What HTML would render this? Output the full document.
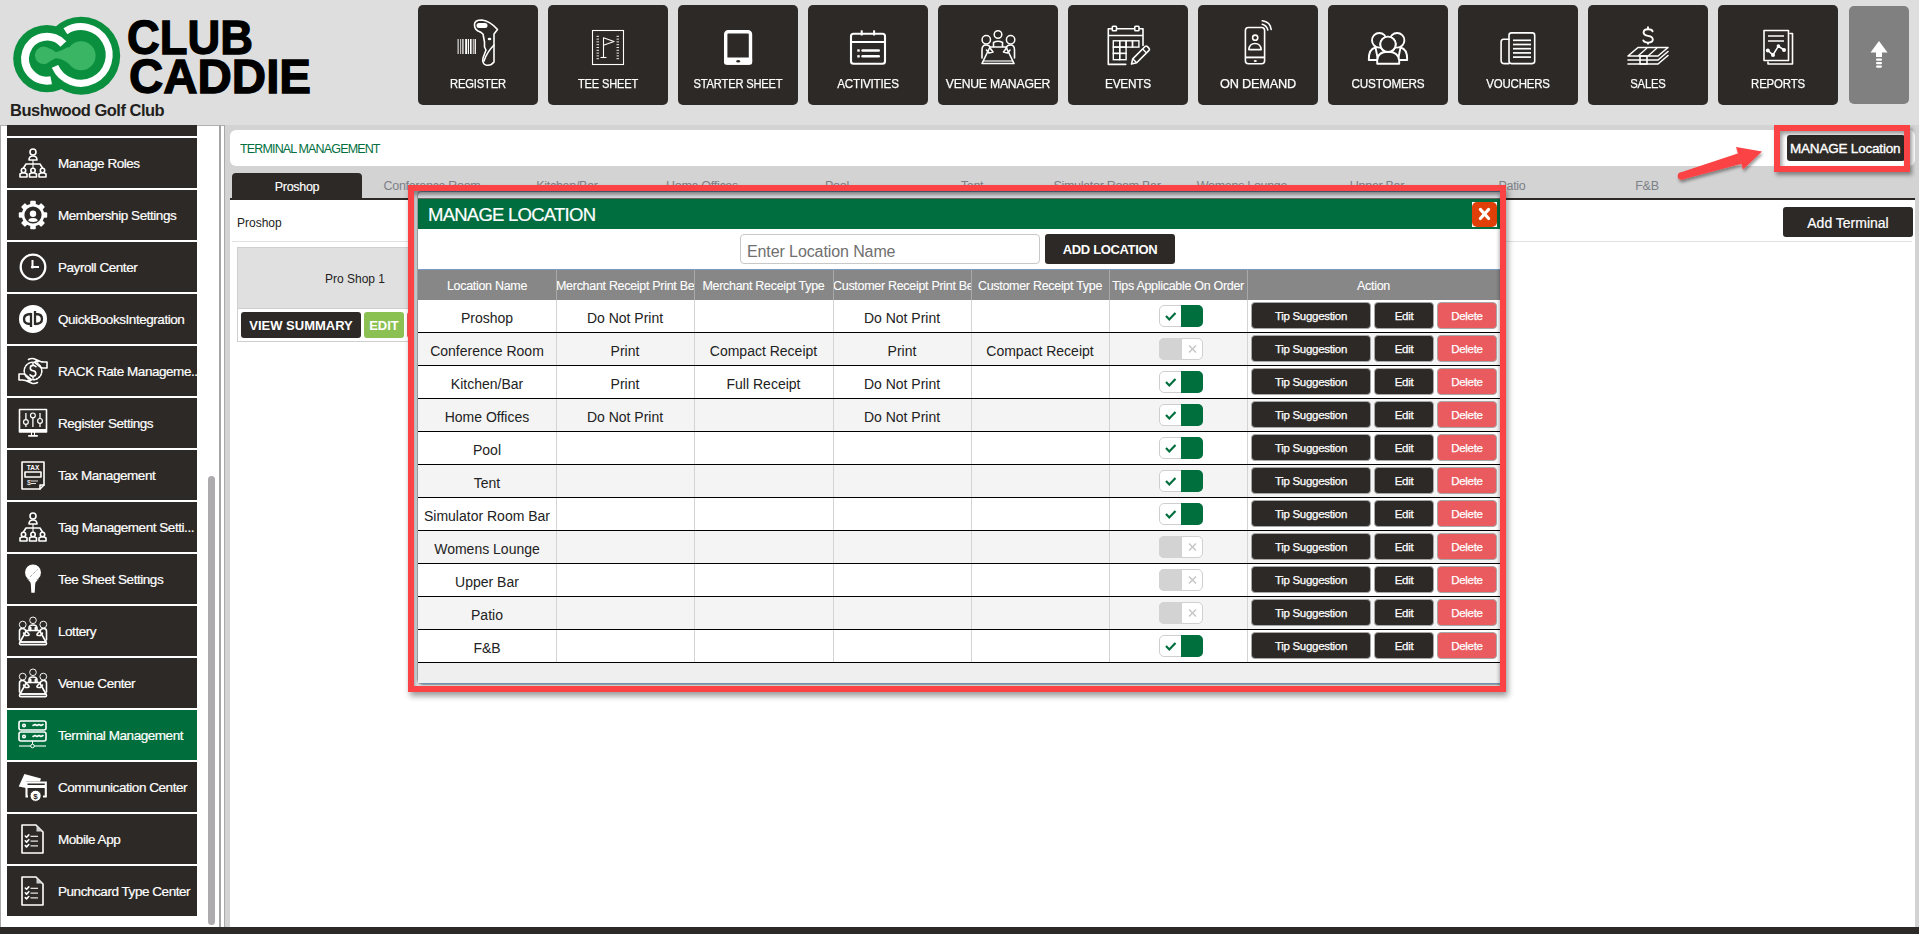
<!DOCTYPE html><html><head><meta charset="utf-8"><style>
*{margin:0;padding:0}
html,body{width:1919px;height:934px;overflow:hidden;background:#dedede;font-family:'Liberation Sans', sans-serif;position:relative}
.nav{position:absolute;top:5px;width:120px;height:100px;background:#2d2926;border-radius:5px}
.nav span{position:absolute;left:0;right:0;top:72px;text-align:center;font:12.5px 'Liberation Sans', sans-serif;color:#fff;letter-spacing:-0.2px;white-space:nowrap;-webkit-text-stroke:0.25px #fff;transform:scaleX(0.88)}
.si{position:absolute;left:7px;width:190px;height:50px;background:#2d2926}
.si.act{background:#006e3c}
.si span{position:absolute;left:51px;top:17.5px;font:13.5px 'Liberation Sans', sans-serif;color:#fff;letter-spacing:-0.45px;white-space:nowrap;-webkit-text-stroke:0.2px #fff}
.tab{position:absolute;top:173px;width:130px;height:24px;text-align:center;font:12.5px/27px 'Liberation Sans', sans-serif;color:#7c8088;letter-spacing:-0.3px;white-space:nowrap}
.tab.act{background:#2d2926;color:#fff;border-radius:4px 4px 0 0;top:173px;height:26px;line-height:28px;-webkit-text-stroke:0.15px #fff}
.btn{position:absolute;background:#2d2926;color:#fff;border-radius:3px;text-align:center;white-space:nowrap;font-family:'Liberation Sans', sans-serif}
.th{position:absolute;top:270px;height:30px;text-align:center;font:12.5px/33px 'Liberation Sans', sans-serif;color:#fff;letter-spacing:-0.3px;white-space:nowrap;overflow:hidden;-webkit-text-stroke:0.1px #fff}
.td{position:absolute;height:32px;text-align:center;font:14px/36px 'Liberation Sans', sans-serif;color:#222;white-space:nowrap}
.tg{position:absolute;left:1159px;width:42px;height:20px;border:1px solid #cfcfcf;border-radius:5px;background:#fff}
.ab{position:absolute;height:27px;background:#2d2926;border:1px solid #a8a8a8;border-radius:4px;box-sizing:border-box;text-align:center;font:11.5px/27px 'Liberation Sans', sans-serif;color:#fff;letter-spacing:-0.3px;-webkit-text-stroke:0.25px #fff}
</style></head><body>
<svg style="position:absolute;left:0;top:0" width="330" height="100" viewBox="0 0 330 100">
<circle cx="46.9" cy="58.6" r="33.7" fill="#0a8f3f"/>
<circle cx="81.2" cy="55.8" r="39" fill="#0a8f3f"/>
<path d="M 51.2 80.3 A 22 22 0 1 1 63.4 44.0" stroke="#fff" stroke-width="8" fill="none"/>
<path d="M 65.4 31.3 A 28.3 28.3 0 1 1 55.0 66.4" stroke="#fff" stroke-width="7" fill="none"/>
<circle cx="43.6" cy="55.3" r="8.7" fill="#3ab563"/>
<circle cx="81.1" cy="55.8" r="14.5" fill="#3ab563"/>
<path d="M 43.6 47.1 Q 50.5 47.8 56 52.2 Q 62 50.8 68.5 46.8 L 74.4 68.8 Q 64 57.8 55.5 58.3 Q 49.5 61.8 43.6 64.5 Z" fill="#3ab563"/>
<text x="127" y="53.5" font-family="Liberation Sans" font-weight="bold" font-size="48" fill="#000" stroke="#000" stroke-width="1.3" textLength="126" lengthAdjust="spacingAndGlyphs">CLUB</text>
<text x="129" y="93.3" font-family="Liberation Sans" font-weight="bold" font-size="48" fill="#000" stroke="#000" stroke-width="1.3" textLength="182" lengthAdjust="spacingAndGlyphs">CADDIE</text>
</svg>
<div style="position:absolute;left:10px;top:100.5px;font:bold 16.5px/18px 'Liberation Sans', sans-serif;color:#231f1c;letter-spacing:-0.5px">Bushwood Golf Club</div>
<div class="nav" style="left:418px"><span style="transform:scaleX(0.897)">REGISTER</span></div><div class="nav" style="left:548px"><span style="transform:scaleX(0.887)">TEE SHEET</span></div><div class="nav" style="left:678px"><span style="transform:scaleX(0.892)">STARTER SHEET</span></div><div class="nav" style="left:808px"><span style="transform:scaleX(0.931)">ACTIVITIES</span></div><div class="nav" style="left:938px"><span style="transform:scaleX(0.975)">VENUE MANAGER</span></div><div class="nav" style="left:1068px"><span style="transform:scaleX(0.944)">EVENTS</span></div><div class="nav" style="left:1198px"><span style="transform:scaleX(1.02)">ON DEMAND</span></div><div class="nav" style="left:1328px"><span style="transform:scaleX(0.938)">CUSTOMERS</span></div><div class="nav" style="left:1458px"><span style="transform:scaleX(0.915)">VOUCHERS</span></div><div class="nav" style="left:1588px"><span style="transform:scaleX(0.901)">SALES</span></div><div class="nav" style="left:1718px"><span style="transform:scaleX(0.915)">REPORTS</span></div><div class="nav" style="left:1849px;top:6px;width:60px;height:98px;background:#808080"></div><svg style="position:absolute;left:0;top:0" width="1919" height="110" viewBox="0 0 1919 110"><rect x="457.6" y="39" width="1.0" height="15" fill="#fff"/><rect x="460.3" y="39" width="0.8" height="15" fill="#fff"/><rect x="462.3" y="39" width="1.2" height="15" fill="#fff"/><rect x="465.2" y="39" width="2.0" height="15" fill="#fff"/><rect x="468" y="39" width="1.0" height="15" fill="#fff"/><rect x="470" y="39" width="1.6" height="15" fill="#fff"/><rect x="472.8" y="39" width="0.8" height="15" fill="#fff"/><rect x="474.6" y="39" width="1.3" height="15" fill="#fff"/><path d="M474.5 25 Q474 20 482 20 Q490 21 497.5 29.5 L494 34 L494 62 Q491 66 486 65 Q482 64 483 58 L486 50 L484.5 47 L484.5 42 L483 34 Q481 32 478 31 Q474.5 29 474.5 25 Z" stroke="#fff" fill="none" stroke-width="1.6" stroke-linecap="round" stroke-linejoin="round"/>
<rect x="476.5" y="23" width="11" height="5" rx="2.5" fill="#fff"/>
<ellipse cx="489.5" cy="39" rx="1.8" ry="1.2" fill="#fff"/>
<path d="M494 45 Q487 52 484 61" stroke="#fff" fill="none" stroke-width="1.6" stroke-linecap="round" stroke-linejoin="round"/><rect x="592.5" y="30.5" width="31" height="34" stroke="#fff" stroke-width="1.1" fill="none"/><line x1="596.5" y1="36.3" x2="599" y2="36.3" stroke="#fff" stroke-width="0.9"/><line x1="616.5" y1="36.3" x2="619" y2="36.3" stroke="#fff" stroke-width="0.9"/><line x1="596.5" y1="39.099999999999994" x2="599" y2="39.099999999999994" stroke="#fff" stroke-width="0.9"/><line x1="616.5" y1="39.099999999999994" x2="619" y2="39.099999999999994" stroke="#fff" stroke-width="0.9"/><line x1="596.5" y1="41.9" x2="599" y2="41.9" stroke="#fff" stroke-width="0.9"/><line x1="616.5" y1="41.9" x2="619" y2="41.9" stroke="#fff" stroke-width="0.9"/><line x1="596.5" y1="44.699999999999996" x2="599" y2="44.699999999999996" stroke="#fff" stroke-width="0.9"/><line x1="616.5" y1="44.699999999999996" x2="619" y2="44.699999999999996" stroke="#fff" stroke-width="0.9"/><line x1="596.5" y1="47.5" x2="599" y2="47.5" stroke="#fff" stroke-width="0.9"/><line x1="616.5" y1="47.5" x2="619" y2="47.5" stroke="#fff" stroke-width="0.9"/><line x1="596.5" y1="50.3" x2="599" y2="50.3" stroke="#fff" stroke-width="0.9"/><line x1="616.5" y1="50.3" x2="619" y2="50.3" stroke="#fff" stroke-width="0.9"/><line x1="596.5" y1="53.099999999999994" x2="599" y2="53.099999999999994" stroke="#fff" stroke-width="0.9"/><line x1="616.5" y1="53.099999999999994" x2="619" y2="53.099999999999994" stroke="#fff" stroke-width="0.9"/><line x1="596.5" y1="55.89999999999999" x2="599" y2="55.89999999999999" stroke="#fff" stroke-width="0.9"/><line x1="616.5" y1="55.89999999999999" x2="619" y2="55.89999999999999" stroke="#fff" stroke-width="0.9"/><line x1="596.5" y1="58.699999999999996" x2="599" y2="58.699999999999996" stroke="#fff" stroke-width="0.9"/><line x1="616.5" y1="58.699999999999996" x2="619" y2="58.699999999999996" stroke="#fff" stroke-width="0.9"/><line x1="603.5" y1="57.3" x2="603.5" y2="37.5" stroke="#fff" stroke-width="1.1"/><path d="M603.5 37.8 L614 41.6 L603.5 45.2" stroke="#fff" stroke-width="1.1" fill="none" stroke-linejoin="round"/><line x1="600.5" y1="57.5" x2="606.5" y2="57.5" stroke="#fff" stroke-width="1.1"/><rect x="725.7" y="31.8" width="24.8" height="31.2" rx="2.5" stroke="#fff" stroke-width="3.4" fill="none"/>
<rect x="724" y="57.6" width="28.2" height="7.2" rx="2.5" fill="#fff"/>
<ellipse cx="738.2" cy="61.3" rx="1.9" ry="1.3" fill="#2d2926"/><rect x="851" y="33.8" width="34" height="30" rx="2.5" stroke="#fff" stroke-width="2.1" fill="none"/>
<line x1="851" y1="42.1" x2="885" y2="42.1" stroke="#fff" stroke-width="2"/>
<line x1="861.7" y1="30.3" x2="861.7" y2="35.5" stroke="#fff" stroke-width="2"/><line x1="874.1" y1="30.3" x2="874.1" y2="35.5" stroke="#fff" stroke-width="2"/>
<rect x="857.3" y="49.3" width="2.4" height="2.4" fill="#fff"/><line x1="862.5" y1="50.5" x2="878.8" y2="50.5" stroke="#fff" stroke-width="2.4" stroke-linecap="round"/>
<rect x="857.3" y="55.1" width="2.4" height="2.4" fill="#fff"/><line x1="862.5" y1="56.3" x2="878.8" y2="56.3" stroke="#fff" stroke-width="2.4" stroke-linecap="round"/><circle cx="998" cy="34.5" r="3.8" stroke="#fff" stroke-width="1.5" fill="none"/><circle cx="986.3" cy="39.8" r="4.2" stroke="#fff" stroke-width="1.5" fill="none"/><circle cx="1010.6" cy="39.8" r="4.2" stroke="#fff" stroke-width="1.5" fill="none"/>
<path d="M993.5 46.5 L993.5 42.5 Q998 40 1002.5 42.5 L1002.5 46.5" stroke="#fff" fill="none" stroke-width="1.6" stroke-linecap="round" stroke-linejoin="round" stroke-width="1.5"/>
<path d="M990 47 L1006 47 L1014 63.5 L982 63.5 Z" stroke="#fff" fill="none" stroke-width="1.6" stroke-linecap="round" stroke-linejoin="round" stroke-width="1.5"/>
<line x1="983" y1="61" x2="1013" y2="61" stroke="#fff" stroke-width="1.2"/>
<path d="M982 58 L982 50 Q982 45 986 45 Q990 45 990 48 L993 52 L989 53 L986.5 50" stroke="#fff" fill="none" stroke-width="1.6" stroke-linecap="round" stroke-linejoin="round" stroke-width="1.4"/>
<path d="M1014.5 58 L1014.5 50 Q1014.5 45 1010.5 45 Q1006.5 45 1006.5 48 L1003.5 52 L1007.5 53 L1010 50" stroke="#fff" fill="none" stroke-width="1.6" stroke-linecap="round" stroke-linejoin="round" stroke-width="1.4"/><path d="M1125.7 64.4 L1108.3 64.4 L1108.3 28.8 L1143 28.8 L1143 45.4" stroke="#fff" fill="none" stroke-width="1.6" stroke-linecap="round" stroke-linejoin="round" stroke-width="1.6" stroke-linecap="butt"/>
<line x1="1108.3" y1="35.5" x2="1143" y2="35.5" stroke="#fff" stroke-width="1.6"/>
<rect x="1112.3" y="26.2" width="4.2" height="4.6" rx="0.8" fill="#2d2926" stroke="#fff" stroke-width="1.6"/><rect x="1134.8" y="26.2" width="4.2" height="4.6" rx="0.8" fill="#2d2926" stroke="#fff" stroke-width="1.6"/><rect x="1113.3" y="40.8" width="6.4" height="6.3" stroke="#fff" stroke-width="1.4" fill="none"/><rect x="1119.7" y="40.8" width="6.4" height="6.3" stroke="#fff" stroke-width="1.4" fill="none"/><rect x="1126.1" y="40.8" width="6.4" height="6.3" stroke="#fff" stroke-width="1.4" fill="none"/><rect x="1132.5" y="40.8" width="6.4" height="6.3" stroke="#fff" stroke-width="1.4" fill="none"/><rect x="1113.3" y="47.099999999999994" width="6.4" height="6.3" stroke="#fff" stroke-width="1.4" fill="none"/><rect x="1119.7" y="47.099999999999994" width="6.4" height="6.3" stroke="#fff" stroke-width="1.4" fill="none"/><rect x="1113.3" y="53.4" width="6.4" height="6.3" stroke="#fff" stroke-width="1.4" fill="none"/><rect x="1119.7" y="53.4" width="6.4" height="6.3" stroke="#fff" stroke-width="1.4" fill="none"/><g transform="rotate(-45 1131.5 64)"><path d="M1131.5 64 L1136 61.2 L1153.5 61.2 Q1155 61.2 1155 63 L1155 65 Q1155 66.8 1153.5 66.8 L1136 66.8 Z" stroke="#fff" fill="none" stroke-width="1.6" stroke-linecap="round" stroke-linejoin="round" stroke-width="1.5"/><line x1="1136" y1="61.2" x2="1136" y2="66.8" stroke="#fff" stroke-width="1.4"/><line x1="1150" y1="61.2" x2="1150" y2="66.8" stroke="#fff" stroke-width="1.4"/></g><rect x="1245.4" y="27.5" width="19.2" height="36.3" rx="3" stroke="#fff" fill="none" stroke-width="1.6" stroke-linecap="round" stroke-linejoin="round" stroke-width="2"/>
<line x1="1245.4" y1="57.4" x2="1264.6" y2="57.4" stroke="#fff" stroke-width="1.9"/>
<ellipse cx="1255.3" cy="61" rx="1.6" ry="1" fill="#fff"/>
<circle cx="1255.2" cy="37.7" r="2.6" stroke="#fff" fill="none" stroke-width="1.6" stroke-linecap="round" stroke-linejoin="round" stroke-width="1.8"/>
<path d="M1248.8 49.6 Q1249.5 43.5 1255 43.5 Q1260.5 43.5 1261.2 49.6 Z" stroke="#fff" fill="none" stroke-width="1.6" stroke-linecap="round" stroke-linejoin="round" stroke-width="1.8"/>
<path d="M1262.3 24.2 Q1266.8 25.5 1267.8 30" stroke="#fff" fill="none" stroke-width="1.6" stroke-linecap="round" stroke-linejoin="round" stroke-width="1.9"/><path d="M1262.3 20.8 Q1270.5 22 1271.2 29.5" stroke="#fff" fill="none" stroke-width="1.6" stroke-linecap="round" stroke-linejoin="round" stroke-width="1.9"/><circle cx="1379.3" cy="40.3" r="7.3" fill="#2d2926" stroke="#fff" stroke-width="1.9"/>
<circle cx="1397.1" cy="40.3" r="7.3" fill="#2d2926" stroke="#fff" stroke-width="1.9"/>
<path d="M1368.8 60 Q1368.5 49 1375.5 47.5 L1378 60 Z" fill="#2d2926" stroke="#fff" stroke-width="1.9" stroke-linejoin="round"/>
<path d="M1407.2 60 Q1407.5 49 1400.5 47.5 L1398 60 Z" fill="#2d2926" stroke="#fff" stroke-width="1.9" stroke-linejoin="round"/>
<circle cx="1388" cy="44.3" r="7.7" fill="#2d2926" stroke="#fff" stroke-width="1.9"/>
<path d="M1377.2 63.8 L1377.2 60.5 Q1377.5 51.8 1388 51.8 Q1398.5 51.8 1399.2 60.5 L1399.2 63.8 Z" fill="#2d2926" stroke="#fff" stroke-width="1.9" stroke-linejoin="round"/>
<circle cx="1388" cy="44.3" r="7.7" fill="#2d2926" stroke="#fff" stroke-width="1.9"/><rect x="1509" y="32.9" width="25.7" height="30.7" rx="2.5" stroke="#fff" fill="none" stroke-width="1.6" stroke-linecap="round" stroke-linejoin="round" stroke-width="1.9"/>
<path d="M1509 39.3 L1503.5 39.3 Q1501.1 39.3 1501.1 42 L1501.1 60.5 Q1501.1 63.6 1504.5 63.6 L1509 63.6" stroke="#fff" fill="none" stroke-width="1.6" stroke-linecap="round" stroke-linejoin="round" stroke-width="1.9"/><line x1="1513" y1="40.3" x2="1531" y2="40.3" stroke="#fff" stroke-width="1.7"/><line x1="1513" y1="44.5" x2="1531" y2="44.5" stroke="#fff" stroke-width="1.7"/><line x1="1513" y1="48.699999999999996" x2="1531" y2="48.699999999999996" stroke="#fff" stroke-width="1.7"/><line x1="1513" y1="52.9" x2="1531" y2="52.9" stroke="#fff" stroke-width="1.7"/><line x1="1513" y1="57.099999999999994" x2="1531" y2="57.099999999999994" stroke="#fff" stroke-width="1.7"/><path d="M1652.6 31.2 Q1651.5 29.3 1648 29.3 Q1643.6 29.3 1643.6 32.6 Q1643.6 35.3 1648 35.9 Q1652.8 36.6 1652.8 39.6 Q1652.8 42.6 1648 42.6 Q1644.2 42.6 1643.3 40.4" stroke="#fff" stroke-width="1.9" fill="none" stroke-linecap="round"/><line x1="1648" y1="26.5" x2="1648" y2="29.3" stroke="#fff" stroke-width="1.9"/><line x1="1648" y1="42.6" x2="1648" y2="44.5" stroke="#fff" stroke-width="1.9"/>
<path d="M1628 56 L1638 47.5 L1668 47.5 L1658 56 Z" stroke="#fff" fill="none" stroke-width="1.6" stroke-linecap="round" stroke-linejoin="round" stroke-width="1.6"/>
<line x1="1638" y1="56" x2="1647" y2="48" stroke="#fff" stroke-width="1.4"/><line x1="1648" y1="56" x2="1657" y2="48" stroke="#fff" stroke-width="1.4"/>
<path d="M1628 60 L1658 60 L1668 51.5" stroke="#fff" fill="none" stroke-width="1.6" stroke-linecap="round" stroke-linejoin="round" stroke-width="1.6"/>
<path d="M1628 64 L1658 64 L1668 55.5" stroke="#fff" fill="none" stroke-width="1.6" stroke-linecap="round" stroke-linejoin="round" stroke-width="1.6"/>
<rect x="1640" y="56" width="7" height="8" stroke="#fff" fill="none" stroke-width="1.6" stroke-linecap="round" stroke-linejoin="round" stroke-width="1.3"/><rect x="1764" y="30.5" width="24.5" height="30" stroke="#fff" fill="none" stroke-width="1.6" stroke-linecap="round" stroke-linejoin="round" stroke-width="1.7"/>
<path d="M1790 33.5 L1792.5 33.5 L1792.5 64 L1768 64 L1768 62" stroke="#fff" fill="none" stroke-width="1.6" stroke-linecap="round" stroke-linejoin="round" stroke-width="1.5"/>
<line x1="1768" y1="36" x2="1784" y2="36" stroke="#fff" stroke-width="1.5"/><line x1="1768" y1="41" x2="1784" y2="41" stroke="#fff" stroke-width="1.5"/>
<path d="M1767.8 50.5 L1773 54.9 L1778.4 46.1 L1784 50" stroke="#fff" fill="none" stroke-width="1.6" stroke-linecap="round" stroke-linejoin="round" stroke-width="1.5"/>
<circle cx="1767.8" cy="50.5" r="2" fill="#fff"/><circle cx="1773" cy="54.9" r="2" fill="#fff"/><circle cx="1778.4" cy="46.1" r="1.8" fill="#fff"/><circle cx="1784" cy="50" r="2" fill="#fff"/><path d="M1879 41 L1887.5 52.5 L1882 52.5 L1882 57 L1876 57 L1876 52.5 L1870.5 52.5 Z" fill="#fff"/>
<rect x="1876" y="58.5" width="6" height="2.2" rx="1" fill="#fff"/><rect x="1876" y="62" width="6" height="2.2" rx="1" fill="#fff"/><rect x="1876" y="65.5" width="6" height="2.2" rx="1.1" fill="#fff"/></svg>
<div style="position:absolute;left:225px;top:125px;width:1694px;height:802px;background:#d3d3d3"></div><div style="position:absolute;left:230px;top:130px;width:1685px;height:36px;background:#fff;border-radius:6px"></div><div style="position:absolute;left:240px;top:142px;font:12.5px 'Liberation Sans', sans-serif;color:#006f3e;letter-spacing:-0.85px">TERMINAL MANAGEMENT</div><div class="tab act" style="left:232px">Proshop</div><div class="tab" style="left:367px">Conference Room</div><div class="tab" style="left:502px">Kitchen/Bar</div><div class="tab" style="left:637px">Home Offices</div><div class="tab" style="left:772px">Pool</div><div class="tab" style="left:907px">Tent</div><div class="tab" style="left:1042px">Simulator Room Bar</div><div class="tab" style="left:1177px">Womens Lounge</div><div class="tab" style="left:1312px">Upper Bar</div><div class="tab" style="left:1447px">Patio</div><div class="tab" style="left:1582px">F&amp;B</div><div style="position:absolute;left:230px;top:198px;width:1685px;height:2px;background:#2d2926"></div><div style="position:absolute;left:230px;top:200px;width:1685px;height:727px;background:#fff"></div><div style="position:absolute;left:237px;top:216px;font:12px 'Liberation Sans', sans-serif;color:#222">Proshop</div><div style="position:absolute;left:232px;top:241px;width:1680px;height:1px;background:#e2e2e2"></div><div class="btn" style="left:1783px;top:207px;width:130px;height:30px;font-size:14px;line-height:32px;-webkit-text-stroke:0.2px #fff">Add Terminal</div><div style="position:absolute;left:237px;top:247px;width:200px;height:95px;border:1px solid #cfcfcf;background:#fff;box-sizing:border-box"></div><div style="position:absolute;left:238px;top:248px;width:198px;height:60px;background:#e0e0e0;border-bottom:1px solid #cfcfcf"></div><div style="position:absolute;left:325px;top:272px;font:12px 'Liberation Sans', sans-serif;color:#222">Pro Shop 1</div><div class="btn" style="left:241px;top:312px;width:120px;height:26px;font:bold 13px/28px 'Liberation Sans', sans-serif">VIEW SUMMARY</div><div class="btn" style="left:364px;top:312px;width:40px;height:26px;font:bold 13px/28px 'Liberation Sans', sans-serif;background:#8bc152">EDIT</div><div class="btn" style="left:407px;top:312px;width:30px;height:26px;background:#e95b5f"></div><div class="btn" style="left:1787px;top:135px;width:118px;height:26px;font:13.5px/28px 'Liberation Sans', sans-serif;-webkit-text-stroke:0.35px #fff;letter-spacing:-0.2px;text-align:left;text-indent:3px">MANAGE Location</div><div style="position:absolute;left:1774px;top:125px;width:136px;height:47px;border:6px solid #fb4345;box-sizing:border-box;box-shadow:2px 3px 4px rgba(0,0,0,0.4), inset 2px 3px 4px rgba(0,0,0,0.4)"></div><svg style="position:absolute;left:1660px;top:140px" width="110" height="50" viewBox="1660 140 110 50">
<defs><filter id="sh" x="-20%" y="-20%" width="140%" height="160%"><feDropShadow dx="1" dy="2.5" stdDeviation="1.8" flood-color="#000" flood-opacity="0.4"/></filter></defs>
<g filter="url(#sh)"><circle cx="1681.5" cy="176" r="3.8" fill="#fb4345"/><path d="M1682.6 179.6 L1741.6 163.8 L1738.4 153.2 L1680.4 172.4 Z" fill="#fb4345"/>
<path d="M1736 147 L1762 151.5 L1743 169.5 Z" fill="#fb4345"/></g></svg>
<div style="position:absolute;left:0;top:125px;width:225px;height:802px;background:#fff;overflow:hidden"><div style="position:absolute;left:0;top:0;width:1px;height:802px;background:#a8a8a8"></div><div style="position:absolute;left:0;top:0;width:225px;height:1px;background:#b0b0b0"></div><div class="si" style="top:-39px"></div><div class="si" style="top:13px"><span>Manage Roles</span></div><div class="si" style="top:65px"><span>Membership Settings</span></div><div class="si" style="top:117px"><span>Payroll Center</span></div><div class="si" style="top:169px"><span>QuickBooksIntegration</span></div><div class="si" style="top:221px"><span>RACK Rate Manageme...</span></div><div class="si" style="top:273px"><span>Register Settings</span></div><div class="si" style="top:325px"><span>Tax Management</span></div><div class="si" style="top:377px"><span>Tag Management Setti...</span></div><div class="si" style="top:429px"><span>Tee Sheet Settings</span></div><div class="si" style="top:481px"><span>Lottery</span></div><div class="si" style="top:533px"><span>Venue Center</span></div><div class="si act" style="top:585px"><span>Terminal Management</span></div><div class="si" style="top:637px"><span>Communication Center</span></div><div class="si" style="top:689px"><span>Mobile App</span></div><div class="si" style="top:741px"><span>Punchcard Type Center</span></div><div style="position:absolute;left:208px;top:351px;width:7px;height:449px;background:#adabad;border-radius:3.5px"></div><div style="position:absolute;left:219px;top:0;width:2px;height:802px;background:#a4a4a4"></div><div style="position:absolute;left:224px;top:0;width:1px;height:802px;background:#aaa"></div></div><svg style="position:absolute;left:0;top:0" width="225" height="927" viewBox="0 0 225 927"><circle cx="33" cy="152" r="3" stroke="#fff" fill="none" stroke-width="1.6" stroke-linecap="round" stroke-linejoin="round" stroke-width="1.1"/><path d="M29 160 Q29 156 33 156 Q37 156 37 160 Z" stroke="#fff" fill="none" stroke-width="1.6" stroke-linecap="round" stroke-linejoin="round" stroke-width="1.1"/>
<line x1="33" y1="160" x2="33" y2="169" stroke="#fff" stroke-width="1.1"/><path d="M23.5 168 L26 164 L40 164 L42.5 168" stroke="#fff" fill="none" stroke-width="1.6" stroke-linecap="round" stroke-linejoin="round" stroke-width="1.1"/>
<circle cx="23.5" cy="170.5" r="2.2" stroke="#fff" fill="none" stroke-width="1.6" stroke-linecap="round" stroke-linejoin="round" stroke-width="1.1"/><path d="M20.0 177 L20.0 174 Q23.5 171.5 27.0 174 L27.0 177 Z" stroke="#fff" fill="none" stroke-width="1.6" stroke-linecap="round" stroke-linejoin="round" stroke-width="1.1"/><circle cx="33" cy="170.5" r="2.2" stroke="#fff" fill="none" stroke-width="1.6" stroke-linecap="round" stroke-linejoin="round" stroke-width="1.1"/><path d="M29.5 177 L29.5 174 Q33 171.5 36.5 174 L36.5 177 Z" stroke="#fff" fill="none" stroke-width="1.6" stroke-linecap="round" stroke-linejoin="round" stroke-width="1.1"/><circle cx="42.5" cy="170.5" r="2.2" stroke="#fff" fill="none" stroke-width="1.6" stroke-linecap="round" stroke-linejoin="round" stroke-width="1.1"/><path d="M39.0 177 L39.0 174 Q42.5 171.5 46.0 174 L46.0 177 Z" stroke="#fff" fill="none" stroke-width="1.6" stroke-linecap="round" stroke-linejoin="round" stroke-width="1.1"/><rect x="30.2" y="200.8" width="5.6" height="4.5" rx="1" fill="#fff" transform="rotate(0 33 215)"/><rect x="30.2" y="200.8" width="5.6" height="4.5" rx="1" fill="#fff" transform="rotate(45 33 215)"/><rect x="30.2" y="200.8" width="5.6" height="4.5" rx="1" fill="#fff" transform="rotate(90 33 215)"/><rect x="30.2" y="200.8" width="5.6" height="4.5" rx="1" fill="#fff" transform="rotate(135 33 215)"/><rect x="30.2" y="200.8" width="5.6" height="4.5" rx="1" fill="#fff" transform="rotate(180 33 215)"/><rect x="30.2" y="200.8" width="5.6" height="4.5" rx="1" fill="#fff" transform="rotate(225 33 215)"/><rect x="30.2" y="200.8" width="5.6" height="4.5" rx="1" fill="#fff" transform="rotate(270 33 215)"/><rect x="30.2" y="200.8" width="5.6" height="4.5" rx="1" fill="#fff" transform="rotate(315 33 215)"/><circle cx="33" cy="215" r="11.3" fill="#fff"/><circle cx="33" cy="215" r="8.6" fill="#2d2926"/>
<path d="M28.3 221 Q28.3 218 33 218 Q37.7 218 37.7 221 Q33 222.8 28.3 221 Z" fill="#fff"/><circle cx="33" cy="213.8" r="4.3" fill="#2d2926"/><circle cx="33" cy="213.8" r="3.2" fill="#fff"/><circle cx="33" cy="267" r="12.3" stroke="#fff" stroke-width="2.3" fill="none"/><path d="M32.5 260 L32.5 267 L39 267" stroke="#fff" stroke-width="2" fill="none"/><circle cx="32.5" cy="267" r="1.6" fill="#fff"/><circle cx="33" cy="319" r="14" fill="#fff"/><path d="M31 313 L31 327 M31 314 Q24 314 24 319 Q24 324 30 324" stroke="#2d2926" stroke-width="2.3" fill="none"/><path d="M35 325 L35 311 M35 324 Q42 324 42 319 Q42 314 36 314" stroke="#2d2926" stroke-width="2.3" fill="none"/><circle cx="33" cy="371" r="8.8" stroke="#fff" fill="none" stroke-width="1.6" stroke-linecap="round" stroke-linejoin="round" stroke-width="0.9" stroke-dasharray="1.6 1.4"/>
<path d="M36 366.7 Q34.8 365.4 33 365.4 Q30.3 365.4 30.3 368 Q30.3 370.4 33 370.7 Q35.8 371 35.8 373.6 Q35.8 376.3 33 376.3 Q31 376.3 30 374.8 M33 363.5 L33 365.4 M33 376.3 L33 378.3" stroke="#fff" fill="none" stroke-width="1.6" stroke-linecap="round" stroke-linejoin="round" stroke-width="1.3"/>
<path d="M28.5 359.5 Q31 358 34 358.7 L40.5 361.5 Q42 362 43.5 362 L47 362 L47 368 L43 368 Q41 368 39.5 366.5 L35.5 363.2 Q34.3 362.2 35.5 361.4 Q36.8 360.8 38 361.8" stroke="#fff" fill="none" stroke-width="1.6" stroke-linecap="round" stroke-linejoin="round" stroke-width="1.3"/>
<path d="M37.5 382.5 Q35 384 32 383.3 L25.5 380.5 Q24 380 22.5 380 L19 380 L19 374 L23 374 Q25 374 26.5 375.5 L30.5 378.8 Q31.7 379.8 30.5 380.6 Q29.2 381.2 28 380.2" stroke="#fff" fill="none" stroke-width="1.6" stroke-linecap="round" stroke-linejoin="round" stroke-width="1.3"/><rect x="19.5" y="409.5" width="27" height="22.5" stroke="#fff" fill="none" stroke-width="1.6" stroke-linecap="round" stroke-linejoin="round" stroke-width="1.2"/><rect x="19.5" y="429" width="27" height="3" fill="#fff"/>
<path d="M31.5 432 L31.5 435.6 M34.5 432 L34.5 435.6" stroke="#fff" stroke-width="1.1"/><rect x="28" y="435" width="10" height="1.8" rx="0.8" fill="#fff"/>
<line x1="25.9" y1="413" x2="25.9" y2="427" stroke="#fff" stroke-width="1.3"/><circle cx="25.9" cy="422" r="2.4" fill="#2d2926" stroke="#fff" stroke-width="1.2"/><line x1="32.9" y1="413" x2="32.9" y2="427" stroke="#fff" stroke-width="1.3"/><circle cx="32.9" cy="415.4" r="2.4" fill="#2d2926" stroke="#fff" stroke-width="1.2"/><line x1="40" y1="413" x2="40" y2="427" stroke="#fff" stroke-width="1.3"/><circle cx="40" cy="420.9" r="2.4" fill="#2d2926" stroke="#fff" stroke-width="1.2"/><path d="M22 462 L44 462 L44 485 L40 489 L22 489 Z" stroke="#fff" fill="none" stroke-width="1.6" stroke-linecap="round" stroke-linejoin="round" stroke-width="1.2"/><path d="M44 485 L40 485 L40 489" stroke="#fff" fill="none" stroke-width="1.6" stroke-linecap="round" stroke-linejoin="round" stroke-width="1"/>
<text x="33" y="470" text-anchor="middle" font-family="Liberation Sans" font-weight="bold" font-size="6.5" fill="#fff">TAX</text>
<rect x="25" y="472" width="16" height="5" stroke="#fff" fill="none" stroke-width="1.6" stroke-linecap="round" stroke-linejoin="round" stroke-width="0.9"/><text x="27" y="485" font-family="Liberation Sans" font-size="7" fill="#fff">$</text><line x1="31" y1="481" x2="38" y2="481" stroke="#fff" stroke-width="0.9"/><line x1="31" y1="483.5" x2="36" y2="483.5" stroke="#fff" stroke-width="0.9"/><circle cx="33" cy="516" r="3" stroke="#fff" fill="none" stroke-width="1.6" stroke-linecap="round" stroke-linejoin="round" stroke-width="1.1"/><path d="M29 524 Q29 520 33 520 Q37 520 37 524 Z" stroke="#fff" fill="none" stroke-width="1.6" stroke-linecap="round" stroke-linejoin="round" stroke-width="1.1"/>
<line x1="33" y1="524" x2="33" y2="533" stroke="#fff" stroke-width="1.1"/><path d="M23.5 532 L26 528 L40 528 L42.5 532" stroke="#fff" fill="none" stroke-width="1.6" stroke-linecap="round" stroke-linejoin="round" stroke-width="1.1"/>
<circle cx="23.5" cy="534.5" r="2.2" stroke="#fff" fill="none" stroke-width="1.6" stroke-linecap="round" stroke-linejoin="round" stroke-width="1.1"/><path d="M20.0 541 L20.0 538 Q23.5 535.5 27.0 538 L27.0 541 Z" stroke="#fff" fill="none" stroke-width="1.6" stroke-linecap="round" stroke-linejoin="round" stroke-width="1.1"/><circle cx="33" cy="534.5" r="2.2" stroke="#fff" fill="none" stroke-width="1.6" stroke-linecap="round" stroke-linejoin="round" stroke-width="1.1"/><path d="M29.5 541 L29.5 538 Q33 535.5 36.5 538 L36.5 541 Z" stroke="#fff" fill="none" stroke-width="1.6" stroke-linecap="round" stroke-linejoin="round" stroke-width="1.1"/><circle cx="42.5" cy="534.5" r="2.2" stroke="#fff" fill="none" stroke-width="1.6" stroke-linecap="round" stroke-linejoin="round" stroke-width="1.1"/><path d="M39.0 541 L39.0 538 Q42.5 535.5 46.0 538 L46.0 541 Z" stroke="#fff" fill="none" stroke-width="1.6" stroke-linecap="round" stroke-linejoin="round" stroke-width="1.1"/><circle cx="33" cy="572.5" r="8" fill="#fff"/><path d="M27 579.5 Q30.5 581 30.8 584 L31.3 592.8 L34.7 592.8 L35.2 584 Q35.5 581 39 579.5 Z" fill="#fff"/>
<path d="M30 577 L37.5 569.5" stroke="#2d2926" stroke-width="0.7" stroke-dasharray="0.8 1.2"/><circle cx="33" cy="620.3" r="3.3" stroke="#fff" stroke-width="0.95" fill="none"/><circle cx="22.7" cy="624.6" r="3.4" stroke="#fff" stroke-width="0.95" fill="none"/><circle cx="43.3" cy="624.6" r="3.4" stroke="#fff" stroke-width="0.95" fill="none"/>
<path d="M29 630.5 L29 628 Q29 625 33 625 Q37 625 37 628 L37 630.5 M30.7 630.5 L30.7 627.5 M35.3 630.5 L35.3 627.5" stroke="#fff" fill="none" stroke-width="1.6" stroke-linecap="round" stroke-linejoin="round" stroke-width="0.9"/>
<path d="M26.5 630.5 L39.5 630.5 L46 642 L20 642 Z" stroke="#fff" fill="none" stroke-width="1.6" stroke-linecap="round" stroke-linejoin="round" stroke-width="0.95"/><rect x="19.5" y="642" width="27" height="2.6" rx="1.2" stroke="#fff" fill="none" stroke-width="1.6" stroke-linecap="round" stroke-linejoin="round" stroke-width="0.95"/>
<path d="M19.5 640 L19.5 631 Q19.5 628.5 22.5 628.5 Q25 628.5 26 631 L28.5 633.5 Q30 635.3 28 635.5 L25.5 635.5 L23.5 633" stroke="#fff" fill="none" stroke-width="1.6" stroke-linecap="round" stroke-linejoin="round" stroke-width="0.95"/>
<path d="M46.5 640 L46.5 631 Q46.5 628.5 43.5 628.5 Q41 628.5 40 631 L37.5 633.5 Q36 635.3 38 635.5 L40.5 635.5 L42.5 633" stroke="#fff" fill="none" stroke-width="1.6" stroke-linecap="round" stroke-linejoin="round" stroke-width="0.95"/><circle cx="33" cy="672.3" r="3.3" stroke="#fff" stroke-width="0.95" fill="none"/><circle cx="22.7" cy="676.6" r="3.4" stroke="#fff" stroke-width="0.95" fill="none"/><circle cx="43.3" cy="676.6" r="3.4" stroke="#fff" stroke-width="0.95" fill="none"/>
<path d="M29 682.5 L29 680 Q29 677 33 677 Q37 677 37 680 L37 682.5 M30.7 682.5 L30.7 679.5 M35.3 682.5 L35.3 679.5" stroke="#fff" fill="none" stroke-width="1.6" stroke-linecap="round" stroke-linejoin="round" stroke-width="0.9"/>
<path d="M26.5 682.5 L39.5 682.5 L46 694 L20 694 Z" stroke="#fff" fill="none" stroke-width="1.6" stroke-linecap="round" stroke-linejoin="round" stroke-width="0.95"/><rect x="19.5" y="694" width="27" height="2.6" rx="1.2" stroke="#fff" fill="none" stroke-width="1.6" stroke-linecap="round" stroke-linejoin="round" stroke-width="0.95"/>
<path d="M19.5 692 L19.5 683 Q19.5 680.5 22.5 680.5 Q25 680.5 26 683 L28.5 685.5 Q30 687.3 28 687.5 L25.5 687.5 L23.5 685" stroke="#fff" fill="none" stroke-width="1.6" stroke-linecap="round" stroke-linejoin="round" stroke-width="0.95"/>
<path d="M46.5 692 L46.5 683 Q46.5 680.5 43.5 680.5 Q41 680.5 40 683 L37.5 685.5 Q36 687.3 38 687.5 L40.5 687.5 L42.5 685" stroke="#fff" fill="none" stroke-width="1.6" stroke-linecap="round" stroke-linejoin="round" stroke-width="0.95"/><rect x="19" y="721" width="27" height="9" rx="2" stroke="#fff" fill="none" stroke-width="1.6" stroke-linecap="round" stroke-linejoin="round" stroke-width="1.1"/><rect x="19" y="732" width="27" height="9" rx="2" stroke="#fff" fill="none" stroke-width="1.6" stroke-linecap="round" stroke-linejoin="round" stroke-width="1.1"/>
<circle cx="24" cy="725.5" r="1.3" stroke="#fff" fill="none" stroke-width="1.6" stroke-linecap="round" stroke-linejoin="round" stroke-width="1"/><circle cx="24" cy="736.5" r="1.3" stroke="#fff" fill="none" stroke-width="1.6" stroke-linecap="round" stroke-linejoin="round" stroke-width="1"/>
<path d="M33 725.5 l2 -1 l2 1 l2 -1 l2 1 l2 -1" stroke="#fff" fill="none" stroke-width="1.6" stroke-linecap="round" stroke-linejoin="round" stroke-width="0.8"/><path d="M33 736.5 l2 -1 l2 1 l2 -1 l2 1 l2 -1" stroke="#fff" fill="none" stroke-width="1.6" stroke-linecap="round" stroke-linejoin="round" stroke-width="0.8"/>
<line x1="19" y1="746" x2="46" y2="746" stroke="#fff" stroke-width="1.1"/><circle cx="32.5" cy="746" r="1.8" fill="#006e3c" stroke="#fff" stroke-width="1"/><line x1="32.5" y1="741" x2="32.5" y2="744" stroke="#fff" stroke-width="1"/><path d="M18.7 786.4 L24.4 774 L41 778.5 L40 781.5 L26 781.5 L26 788 Z" fill="#fff"/>
<path d="M28 796.5 L26.5 796.5 L26.5 782.5 L45.8 782.5 L45.8 796.5 L43 796.5" fill="none" stroke="#fff" stroke-width="2.1"/><rect x="26.5" y="785" width="19.3" height="3" fill="#fff"/>
<circle cx="35.6" cy="795.8" r="5.6" fill="#fff" stroke="#2d2926" stroke-width="1"/><text x="35.6" y="798.6" text-anchor="middle" font-family="Liberation Sans" font-weight="bold" font-size="8" fill="#2d2926">$</text><path d="M22 825 L36 825 L43 832 L43 853 L22 853 Z" stroke="#fff" fill="none" stroke-width="1.6" stroke-linecap="round" stroke-linejoin="round" stroke-width="1.1"/><path d="M36.5 825.5 L36.5 831.5 L42.5 831.5 Z" fill="#cfcfcf"/>
<path d="M25.3 836 l1.3 1.3 l2.2 -2.4" stroke="#fff" fill="none" stroke-width="1.6" stroke-linecap="round" stroke-linejoin="round" stroke-width="0.9"/><line x1="30.5" y1="836.3" x2="38" y2="836.3" stroke="#fff" stroke-width="1.1"/><path d="M25.3 840.8 l1.3 1.3 l2.2 -2.4" stroke="#fff" fill="none" stroke-width="1.6" stroke-linecap="round" stroke-linejoin="round" stroke-width="0.9"/><line x1="30.5" y1="841.0999999999999" x2="38" y2="841.0999999999999" stroke="#fff" stroke-width="1.1"/><path d="M25.3 845.6 l1.3 1.3 l2.2 -2.4" stroke="#fff" fill="none" stroke-width="1.6" stroke-linecap="round" stroke-linejoin="round" stroke-width="0.9"/><line x1="30.5" y1="845.9" x2="38" y2="845.9" stroke="#fff" stroke-width="1.1"/><path d="M22 877 L36 877 L43 884 L43 905 L22 905 Z" stroke="#fff" fill="none" stroke-width="1.6" stroke-linecap="round" stroke-linejoin="round" stroke-width="1.1"/><path d="M36.5 877.5 L36.5 883.5 L42.5 883.5 Z" fill="#cfcfcf"/>
<path d="M25.3 888 l1.3 1.3 l2.2 -2.4" stroke="#fff" fill="none" stroke-width="1.6" stroke-linecap="round" stroke-linejoin="round" stroke-width="0.9"/><line x1="30.5" y1="888.3" x2="38" y2="888.3" stroke="#fff" stroke-width="1.1"/><path d="M25.3 892.8 l1.3 1.3 l2.2 -2.4" stroke="#fff" fill="none" stroke-width="1.6" stroke-linecap="round" stroke-linejoin="round" stroke-width="0.9"/><line x1="30.5" y1="893.0999999999999" x2="38" y2="893.0999999999999" stroke="#fff" stroke-width="1.1"/><path d="M25.3 897.6 l1.3 1.3 l2.2 -2.4" stroke="#fff" fill="none" stroke-width="1.6" stroke-linecap="round" stroke-linejoin="round" stroke-width="0.9"/><line x1="30.5" y1="897.9" x2="38" y2="897.9" stroke="#fff" stroke-width="1.1"/></svg>
<div style="position:absolute;left:0;top:927px;width:1919px;height:7px;background:#2d2926"></div>
<div style="position:absolute;left:414px;top:191px;width:1087px;height:495px;background:#dde2e5"></div><div style="position:absolute;left:417.5px;top:191px;width:1086px;height:492.5px;background:#efefef;border:1px solid #6f8fb3;border-radius:5px;box-sizing:border-box;box-shadow:0 0 1.5px 1px rgba(60,60,60,0.5)"></div><div style="position:absolute;left:418px;top:192px;width:1088px;height:6px;background:#dcdce2;border-radius:4px 0 0 0"></div><div style="position:absolute;left:418px;top:198px;width:1082px;height:1px;background:#6a6464"></div><div style="position:absolute;left:418px;top:199px;width:1082px;height:30px;background:#006e3f"></div><div style="position:absolute;left:428px;top:204px;font:18.5px/22px 'Liberation Sans', sans-serif;color:#fff;letter-spacing:-0.75px;-webkit-text-stroke:0.2px #fff">MANAGE LOCATION</div><div style="position:absolute;left:1472px;top:202px;width:25px;height:25px;background:#fff"></div><div style="position:absolute;left:1472px;top:202px;width:25px;height:25px;background:#e04008;border-radius:5px"></div><svg style="position:absolute;left:1472px;top:202px" width="25" height="25"><path d="M8.35 7.4 L16.65 16.5 M16.65 7.4 L8.35 16.5" stroke="#fff" stroke-width="3.1" stroke-linecap="round"/></svg><div style="position:absolute;left:418px;top:229px;width:1082px;height:40px;background:#fff"></div><div style="position:absolute;left:740px;top:234px;width:300px;height:30px;border:1px solid #c8c8c8;border-radius:4px;box-sizing:border-box;font:16px/33px 'Liberation Sans', sans-serif;color:#6f6f6f;padding-left:6px;letter-spacing:-0.1px">Enter Location Name</div><div class="btn" style="left:1045px;top:234px;width:130px;height:30px;font:bold 13px/31px 'Liberation Sans', sans-serif;letter-spacing:-0.35px">ADD LOCATION</div><div style="position:absolute;left:418px;top:269px;width:1082px;height:31px;background:#878787;border-top:1px solid #7b9bc4;box-sizing:border-box"></div><div class="th" style="left:418px;width:138px">Location Name</div><div class="th" style="left:556px;width:138px">Merchant Receipt Print Be</div><div style="position:absolute;left:556px;top:270px;width:1px;height:30px;background:#a9a9a9"></div><div class="th" style="left:694px;width:139px">Merchant Receipt Type</div><div style="position:absolute;left:694px;top:270px;width:1px;height:30px;background:#a9a9a9"></div><div class="th" style="left:833px;width:138px">Customer Receipt Print Be</div><div style="position:absolute;left:833px;top:270px;width:1px;height:30px;background:#a9a9a9"></div><div class="th" style="left:971px;width:138px">Customer Receipt Type</div><div style="position:absolute;left:971px;top:270px;width:1px;height:30px;background:#a9a9a9"></div><div class="th" style="left:1109px;width:138px">Tips Applicable On Order</div><div style="position:absolute;left:1109px;top:270px;width:1px;height:30px;background:#a9a9a9"></div><div class="th" style="left:1247px;width:253px">Action</div><div style="position:absolute;left:1247px;top:270px;width:1px;height:30px;background:#a9a9a9"></div><div style="position:absolute;left:418px;top:300px;width:1082px;height:32px;background:#fff"></div><div style="position:absolute;left:418px;top:332px;width:1082px;height:1px;background:#000"></div><div class="td" style="left:418px;top:300px;width:138px">Proshop</div><div class="td" style="left:556px;top:300px;width:138px">Do Not Print</div><div class="td" style="left:833px;top:300px;width:138px">Do Not Print</div><div style="position:absolute;left:556px;top:300px;width:1px;height:32px;background:#d4d4d4"></div><div style="position:absolute;left:694px;top:300px;width:1px;height:32px;background:#d4d4d4"></div><div style="position:absolute;left:833px;top:300px;width:1px;height:32px;background:#d4d4d4"></div><div style="position:absolute;left:971px;top:300px;width:1px;height:32px;background:#d4d4d4"></div><div style="position:absolute;left:1109px;top:300px;width:1px;height:32px;background:#d4d4d4"></div><div style="position:absolute;left:1247px;top:300px;width:1px;height:32px;background:#d4d4d4"></div><div class="tg" style="top:305px"><div style="position:absolute;left:21px;top:-1px;width:22px;height:22px;background:#006f3e;border-radius:0 5px 5px 0"></div><svg style="position:absolute;left:0;top:0" width="22" height="20"><path d="M6 10 L9.3 13.5 L15.5 7" stroke="#006f3e" stroke-width="2.2" fill="none"/></svg></div><div class="ab" style="left:1251px;top:302px;width:120px">Tip Suggestion</div><div class="ab" style="left:1374px;top:302px;width:60px">Edit</div><div class="ab" style="left:1437px;top:302px;width:60px;background:#e95b5f">Delete</div><div style="position:absolute;left:418px;top:333px;width:1082px;height:32px;background:#f4f4f4"></div><div style="position:absolute;left:418px;top:365px;width:1082px;height:1px;background:#000"></div><div class="td" style="left:418px;top:333px;width:138px">Conference Room</div><div class="td" style="left:556px;top:333px;width:138px">Print</div><div class="td" style="left:694px;top:333px;width:139px">Compact Receipt</div><div class="td" style="left:833px;top:333px;width:138px">Print</div><div class="td" style="left:971px;top:333px;width:138px">Compact Receipt</div><div style="position:absolute;left:556px;top:333px;width:1px;height:32px;background:#d4d4d4"></div><div style="position:absolute;left:694px;top:333px;width:1px;height:32px;background:#d4d4d4"></div><div style="position:absolute;left:833px;top:333px;width:1px;height:32px;background:#d4d4d4"></div><div style="position:absolute;left:971px;top:333px;width:1px;height:32px;background:#d4d4d4"></div><div style="position:absolute;left:1109px;top:333px;width:1px;height:32px;background:#d4d4d4"></div><div style="position:absolute;left:1247px;top:333px;width:1px;height:32px;background:#d4d4d4"></div><div class="tg" style="top:338px"><div style="position:absolute;left:-1px;top:-1px;width:23px;height:22px;background:#d3d3d3;border-radius:5px 0 0 5px"></div><svg style="position:absolute;left:22px;top:0" width="22" height="20"><path d="M7 6.5 L14 13.5 M14 6.5 L7 13.5" stroke="#c8c8c8" stroke-width="1.6" fill="none"/></svg></div><div class="ab" style="left:1251px;top:335px;width:120px">Tip Suggestion</div><div class="ab" style="left:1374px;top:335px;width:60px">Edit</div><div class="ab" style="left:1437px;top:335px;width:60px;background:#e95b5f">Delete</div><div style="position:absolute;left:418px;top:366px;width:1082px;height:32px;background:#fff"></div><div style="position:absolute;left:418px;top:398px;width:1082px;height:1px;background:#000"></div><div class="td" style="left:418px;top:366px;width:138px">Kitchen/Bar</div><div class="td" style="left:556px;top:366px;width:138px">Print</div><div class="td" style="left:694px;top:366px;width:139px">Full Receipt</div><div class="td" style="left:833px;top:366px;width:138px">Do Not Print</div><div style="position:absolute;left:556px;top:366px;width:1px;height:32px;background:#d4d4d4"></div><div style="position:absolute;left:694px;top:366px;width:1px;height:32px;background:#d4d4d4"></div><div style="position:absolute;left:833px;top:366px;width:1px;height:32px;background:#d4d4d4"></div><div style="position:absolute;left:971px;top:366px;width:1px;height:32px;background:#d4d4d4"></div><div style="position:absolute;left:1109px;top:366px;width:1px;height:32px;background:#d4d4d4"></div><div style="position:absolute;left:1247px;top:366px;width:1px;height:32px;background:#d4d4d4"></div><div class="tg" style="top:371px"><div style="position:absolute;left:21px;top:-1px;width:22px;height:22px;background:#006f3e;border-radius:0 5px 5px 0"></div><svg style="position:absolute;left:0;top:0" width="22" height="20"><path d="M6 10 L9.3 13.5 L15.5 7" stroke="#006f3e" stroke-width="2.2" fill="none"/></svg></div><div class="ab" style="left:1251px;top:368px;width:120px">Tip Suggestion</div><div class="ab" style="left:1374px;top:368px;width:60px">Edit</div><div class="ab" style="left:1437px;top:368px;width:60px;background:#e95b5f">Delete</div><div style="position:absolute;left:418px;top:399px;width:1082px;height:32px;background:#f4f4f4"></div><div style="position:absolute;left:418px;top:431px;width:1082px;height:1px;background:#000"></div><div class="td" style="left:418px;top:399px;width:138px">Home Offices</div><div class="td" style="left:556px;top:399px;width:138px">Do Not Print</div><div class="td" style="left:833px;top:399px;width:138px">Do Not Print</div><div style="position:absolute;left:556px;top:399px;width:1px;height:32px;background:#d4d4d4"></div><div style="position:absolute;left:694px;top:399px;width:1px;height:32px;background:#d4d4d4"></div><div style="position:absolute;left:833px;top:399px;width:1px;height:32px;background:#d4d4d4"></div><div style="position:absolute;left:971px;top:399px;width:1px;height:32px;background:#d4d4d4"></div><div style="position:absolute;left:1109px;top:399px;width:1px;height:32px;background:#d4d4d4"></div><div style="position:absolute;left:1247px;top:399px;width:1px;height:32px;background:#d4d4d4"></div><div class="tg" style="top:404px"><div style="position:absolute;left:21px;top:-1px;width:22px;height:22px;background:#006f3e;border-radius:0 5px 5px 0"></div><svg style="position:absolute;left:0;top:0" width="22" height="20"><path d="M6 10 L9.3 13.5 L15.5 7" stroke="#006f3e" stroke-width="2.2" fill="none"/></svg></div><div class="ab" style="left:1251px;top:401px;width:120px">Tip Suggestion</div><div class="ab" style="left:1374px;top:401px;width:60px">Edit</div><div class="ab" style="left:1437px;top:401px;width:60px;background:#e95b5f">Delete</div><div style="position:absolute;left:418px;top:432px;width:1082px;height:32px;background:#fff"></div><div style="position:absolute;left:418px;top:464px;width:1082px;height:1px;background:#000"></div><div class="td" style="left:418px;top:432px;width:138px">Pool</div><div style="position:absolute;left:556px;top:432px;width:1px;height:32px;background:#d4d4d4"></div><div style="position:absolute;left:694px;top:432px;width:1px;height:32px;background:#d4d4d4"></div><div style="position:absolute;left:833px;top:432px;width:1px;height:32px;background:#d4d4d4"></div><div style="position:absolute;left:971px;top:432px;width:1px;height:32px;background:#d4d4d4"></div><div style="position:absolute;left:1109px;top:432px;width:1px;height:32px;background:#d4d4d4"></div><div style="position:absolute;left:1247px;top:432px;width:1px;height:32px;background:#d4d4d4"></div><div class="tg" style="top:437px"><div style="position:absolute;left:21px;top:-1px;width:22px;height:22px;background:#006f3e;border-radius:0 5px 5px 0"></div><svg style="position:absolute;left:0;top:0" width="22" height="20"><path d="M6 10 L9.3 13.5 L15.5 7" stroke="#006f3e" stroke-width="2.2" fill="none"/></svg></div><div class="ab" style="left:1251px;top:434px;width:120px">Tip Suggestion</div><div class="ab" style="left:1374px;top:434px;width:60px">Edit</div><div class="ab" style="left:1437px;top:434px;width:60px;background:#e95b5f">Delete</div><div style="position:absolute;left:418px;top:465px;width:1082px;height:32px;background:#f4f4f4"></div><div style="position:absolute;left:418px;top:497px;width:1082px;height:1px;background:#000"></div><div class="td" style="left:418px;top:465px;width:138px">Tent</div><div style="position:absolute;left:556px;top:465px;width:1px;height:32px;background:#d4d4d4"></div><div style="position:absolute;left:694px;top:465px;width:1px;height:32px;background:#d4d4d4"></div><div style="position:absolute;left:833px;top:465px;width:1px;height:32px;background:#d4d4d4"></div><div style="position:absolute;left:971px;top:465px;width:1px;height:32px;background:#d4d4d4"></div><div style="position:absolute;left:1109px;top:465px;width:1px;height:32px;background:#d4d4d4"></div><div style="position:absolute;left:1247px;top:465px;width:1px;height:32px;background:#d4d4d4"></div><div class="tg" style="top:470px"><div style="position:absolute;left:21px;top:-1px;width:22px;height:22px;background:#006f3e;border-radius:0 5px 5px 0"></div><svg style="position:absolute;left:0;top:0" width="22" height="20"><path d="M6 10 L9.3 13.5 L15.5 7" stroke="#006f3e" stroke-width="2.2" fill="none"/></svg></div><div class="ab" style="left:1251px;top:467px;width:120px">Tip Suggestion</div><div class="ab" style="left:1374px;top:467px;width:60px">Edit</div><div class="ab" style="left:1437px;top:467px;width:60px;background:#e95b5f">Delete</div><div style="position:absolute;left:418px;top:498px;width:1082px;height:32px;background:#fff"></div><div style="position:absolute;left:418px;top:530px;width:1082px;height:1px;background:#000"></div><div class="td" style="left:418px;top:498px;width:138px">Simulator Room Bar</div><div style="position:absolute;left:556px;top:498px;width:1px;height:32px;background:#d4d4d4"></div><div style="position:absolute;left:694px;top:498px;width:1px;height:32px;background:#d4d4d4"></div><div style="position:absolute;left:833px;top:498px;width:1px;height:32px;background:#d4d4d4"></div><div style="position:absolute;left:971px;top:498px;width:1px;height:32px;background:#d4d4d4"></div><div style="position:absolute;left:1109px;top:498px;width:1px;height:32px;background:#d4d4d4"></div><div style="position:absolute;left:1247px;top:498px;width:1px;height:32px;background:#d4d4d4"></div><div class="tg" style="top:503px"><div style="position:absolute;left:21px;top:-1px;width:22px;height:22px;background:#006f3e;border-radius:0 5px 5px 0"></div><svg style="position:absolute;left:0;top:0" width="22" height="20"><path d="M6 10 L9.3 13.5 L15.5 7" stroke="#006f3e" stroke-width="2.2" fill="none"/></svg></div><div class="ab" style="left:1251px;top:500px;width:120px">Tip Suggestion</div><div class="ab" style="left:1374px;top:500px;width:60px">Edit</div><div class="ab" style="left:1437px;top:500px;width:60px;background:#e95b5f">Delete</div><div style="position:absolute;left:418px;top:531px;width:1082px;height:32px;background:#f4f4f4"></div><div style="position:absolute;left:418px;top:563px;width:1082px;height:1px;background:#000"></div><div class="td" style="left:418px;top:531px;width:138px">Womens Lounge</div><div style="position:absolute;left:556px;top:531px;width:1px;height:32px;background:#d4d4d4"></div><div style="position:absolute;left:694px;top:531px;width:1px;height:32px;background:#d4d4d4"></div><div style="position:absolute;left:833px;top:531px;width:1px;height:32px;background:#d4d4d4"></div><div style="position:absolute;left:971px;top:531px;width:1px;height:32px;background:#d4d4d4"></div><div style="position:absolute;left:1109px;top:531px;width:1px;height:32px;background:#d4d4d4"></div><div style="position:absolute;left:1247px;top:531px;width:1px;height:32px;background:#d4d4d4"></div><div class="tg" style="top:536px"><div style="position:absolute;left:-1px;top:-1px;width:23px;height:22px;background:#d3d3d3;border-radius:5px 0 0 5px"></div><svg style="position:absolute;left:22px;top:0" width="22" height="20"><path d="M7 6.5 L14 13.5 M14 6.5 L7 13.5" stroke="#c8c8c8" stroke-width="1.6" fill="none"/></svg></div><div class="ab" style="left:1251px;top:533px;width:120px">Tip Suggestion</div><div class="ab" style="left:1374px;top:533px;width:60px">Edit</div><div class="ab" style="left:1437px;top:533px;width:60px;background:#e95b5f">Delete</div><div style="position:absolute;left:418px;top:564px;width:1082px;height:32px;background:#fff"></div><div style="position:absolute;left:418px;top:596px;width:1082px;height:1px;background:#000"></div><div class="td" style="left:418px;top:564px;width:138px">Upper Bar</div><div style="position:absolute;left:556px;top:564px;width:1px;height:32px;background:#d4d4d4"></div><div style="position:absolute;left:694px;top:564px;width:1px;height:32px;background:#d4d4d4"></div><div style="position:absolute;left:833px;top:564px;width:1px;height:32px;background:#d4d4d4"></div><div style="position:absolute;left:971px;top:564px;width:1px;height:32px;background:#d4d4d4"></div><div style="position:absolute;left:1109px;top:564px;width:1px;height:32px;background:#d4d4d4"></div><div style="position:absolute;left:1247px;top:564px;width:1px;height:32px;background:#d4d4d4"></div><div class="tg" style="top:569px"><div style="position:absolute;left:-1px;top:-1px;width:23px;height:22px;background:#d3d3d3;border-radius:5px 0 0 5px"></div><svg style="position:absolute;left:22px;top:0" width="22" height="20"><path d="M7 6.5 L14 13.5 M14 6.5 L7 13.5" stroke="#c8c8c8" stroke-width="1.6" fill="none"/></svg></div><div class="ab" style="left:1251px;top:566px;width:120px">Tip Suggestion</div><div class="ab" style="left:1374px;top:566px;width:60px">Edit</div><div class="ab" style="left:1437px;top:566px;width:60px;background:#e95b5f">Delete</div><div style="position:absolute;left:418px;top:597px;width:1082px;height:32px;background:#f4f4f4"></div><div style="position:absolute;left:418px;top:629px;width:1082px;height:1px;background:#000"></div><div class="td" style="left:418px;top:597px;width:138px">Patio</div><div style="position:absolute;left:556px;top:597px;width:1px;height:32px;background:#d4d4d4"></div><div style="position:absolute;left:694px;top:597px;width:1px;height:32px;background:#d4d4d4"></div><div style="position:absolute;left:833px;top:597px;width:1px;height:32px;background:#d4d4d4"></div><div style="position:absolute;left:971px;top:597px;width:1px;height:32px;background:#d4d4d4"></div><div style="position:absolute;left:1109px;top:597px;width:1px;height:32px;background:#d4d4d4"></div><div style="position:absolute;left:1247px;top:597px;width:1px;height:32px;background:#d4d4d4"></div><div class="tg" style="top:602px"><div style="position:absolute;left:-1px;top:-1px;width:23px;height:22px;background:#d3d3d3;border-radius:5px 0 0 5px"></div><svg style="position:absolute;left:22px;top:0" width="22" height="20"><path d="M7 6.5 L14 13.5 M14 6.5 L7 13.5" stroke="#c8c8c8" stroke-width="1.6" fill="none"/></svg></div><div class="ab" style="left:1251px;top:599px;width:120px">Tip Suggestion</div><div class="ab" style="left:1374px;top:599px;width:60px">Edit</div><div class="ab" style="left:1437px;top:599px;width:60px;background:#e95b5f">Delete</div><div style="position:absolute;left:418px;top:630px;width:1082px;height:32px;background:#fff"></div><div style="position:absolute;left:418px;top:662px;width:1082px;height:1px;background:#000"></div><div class="td" style="left:418px;top:630px;width:138px">F&amp;B</div><div style="position:absolute;left:556px;top:630px;width:1px;height:32px;background:#d4d4d4"></div><div style="position:absolute;left:694px;top:630px;width:1px;height:32px;background:#d4d4d4"></div><div style="position:absolute;left:833px;top:630px;width:1px;height:32px;background:#d4d4d4"></div><div style="position:absolute;left:971px;top:630px;width:1px;height:32px;background:#d4d4d4"></div><div style="position:absolute;left:1109px;top:630px;width:1px;height:32px;background:#d4d4d4"></div><div style="position:absolute;left:1247px;top:630px;width:1px;height:32px;background:#d4d4d4"></div><div class="tg" style="top:635px"><div style="position:absolute;left:21px;top:-1px;width:22px;height:22px;background:#006f3e;border-radius:0 5px 5px 0"></div><svg style="position:absolute;left:0;top:0" width="22" height="20"><path d="M6 10 L9.3 13.5 L15.5 7" stroke="#006f3e" stroke-width="2.2" fill="none"/></svg></div><div class="ab" style="left:1251px;top:632px;width:120px">Tip Suggestion</div><div class="ab" style="left:1374px;top:632px;width:60px">Edit</div><div class="ab" style="left:1437px;top:632px;width:60px;background:#e95b5f">Delete</div><div style="position:absolute;left:418px;top:663px;width:1082px;height:20px;background:#efefef"></div><div style="position:absolute;left:408px;top:185px;width:1098px;height:507px;border:6px solid #fb4345;box-sizing:border-box;box-shadow:2px 4px 6px rgba(0,0,0,0.4), inset 0 3.5px 4px rgba(0,0,0,0.45)"></div>
</body></html>
